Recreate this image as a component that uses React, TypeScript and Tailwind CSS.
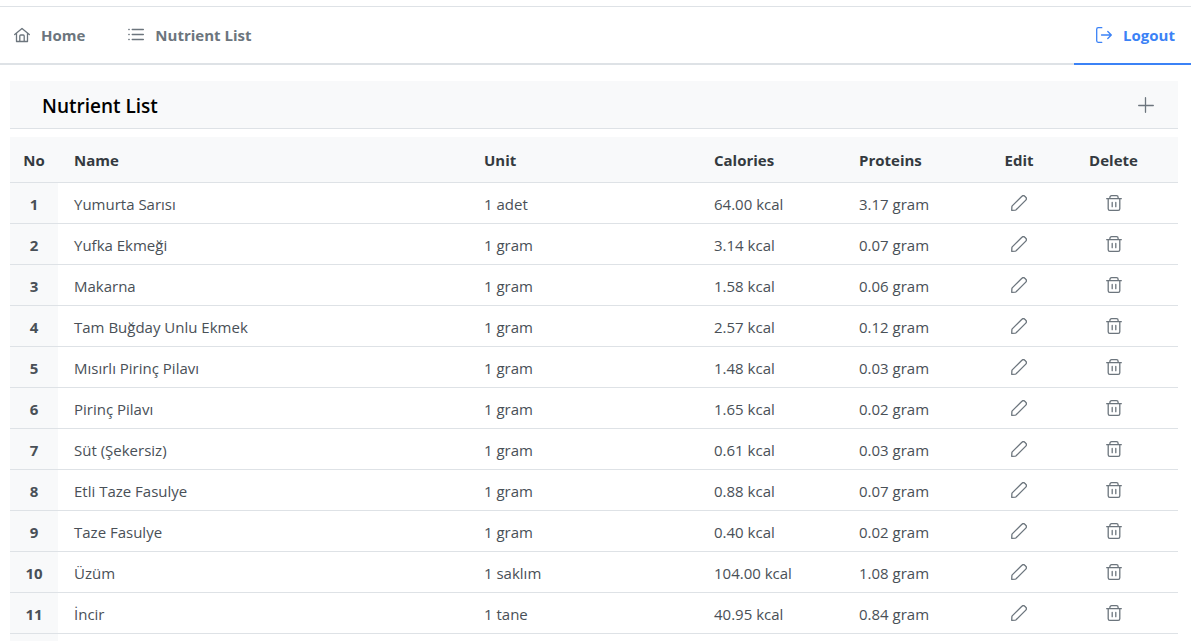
import type { ReactNode } from 'react';

type Nutrient = { name: string; unit: string; calories: string; proteins: string };

const nutrients: Nutrient[] = [
  { name: 'Yumurta Sarısı', unit: '1 adet', calories: '64.00 kcal', proteins: '3.17 gram' },
  { name: 'Yufka Ekmeği', unit: '1 gram', calories: '3.14 kcal', proteins: '0.07 gram' },
  { name: 'Makarna', unit: '1 gram', calories: '1.58 kcal', proteins: '0.06 gram' },
  { name: 'Tam Buğday Unlu Ekmek', unit: '1 gram', calories: '2.57 kcal', proteins: '0.12 gram' },
  { name: 'Mısırlı Pirinç Pilavı', unit: '1 gram', calories: '1.48 kcal', proteins: '0.03 gram' },
  { name: 'Pirinç Pilavı', unit: '1 gram', calories: '1.65 kcal', proteins: '0.02 gram' },
  { name: 'Süt (Şekersiz)', unit: '1 gram', calories: '0.61 kcal', proteins: '0.03 gram' },
  { name: 'Etli Taze Fasulye', unit: '1 gram', calories: '0.88 kcal', proteins: '0.07 gram' },
  { name: 'Taze Fasulye', unit: '1 gram', calories: '0.40 kcal', proteins: '0.02 gram' },
  { name: 'Üzüm', unit: '1 saklım', calories: '104.00 kcal', proteins: '1.08 gram' },
  { name: 'İncir', unit: '1 tane', calories: '40.95 kcal', proteins: '0.84 gram' },
];

function Icon({ children }: { children: ReactNode }) {
  return (
    <svg
      className="size-4 shrink-0"
      viewBox="0 0 16 16"
      fill="none"
      stroke="currentColor"
      strokeWidth="1.3"
      strokeLinecap="round"
      strokeLinejoin="round"
      aria-hidden="true"
    >
      {children}
    </svg>
  );
}

const HomeIcon = () => (
  <Icon>
    <path d="M.7 7.500 8 1.500l7.300 6M2.500 6.300v8.200h11V6.300M5.800 14.300V8.900q0-.9.9-.9h2.600q.9 0 .9.9v5.400" />
  </Icon>
);

const ListIcon = () => (
  <Icon>
    <path d="M4.200 2.500h11.200M4.200 7.500h11.200M4.200 12.500h11.200M.8 2.500h.4M.8 7.500h.4M.8 12.500h.4" />
  </Icon>
);

const LogoutIcon = () => (
  <Icon>
    <path d="M5.800 15.300H2.200A1.600 1.600 0 0 1 .7 13.700V2.300A1.600 1.600 0 0 1 2.200.7H5.800M5.500 8h9.700M11.800 4.500 15.300 8l-3.500 3.500" />
  </Icon>
);

const PlusIcon = () => (
  <Icon>
    <path d="M7.500.7v14.600M.7 8.500h14.600" />
  </Icon>
);

const PencilIcon = () => (
  <Icon>
    <path d="M.7 15.300.9 11.600Q.95 11.200 1.200 10.900L10.900 1.200a2 2 0 0 1 2.900 0l1 1a2 2 0 0 1 0 2.900L5.100 14.800q-.3.25-.7.300Z" />
  </Icon>
);

const TrashIcon = () => (
  <Icon>
    <path d="M.7 3.700h14.600M2.200 3.700v10a1.600 1.600 0 0 0 1.600 1.600h8.400a1.600 1.600 0 0 0 1.600-1.600v-10M3.900 3.700V2.300A1.600 1.600 0 0 1 5.500.7h5a1.600 1.600 0 0 1 1.600 1.600v1.400M6.200 7.400v4.300M9.800 7.400v4.300" />
  </Icon>
);

export default function App() {
  return (
    <div className="flex h-screen flex-col overflow-hidden bg-white pt-1.5 pb-0.5 font-['Open_Sans','Noto_Sans',sans-serif] text-[15px] leading-6 text-[#495057]">
      <nav className="flex shrink-0 justify-between border-t border-[#dee2e6] font-bold text-[#6c757d] shadow-[inset_0_-2px_0_#dee2e6]">
        <div className="flex">
          <a href="#home" className="flex items-center gap-[11px] border-b-2 border-[#dee2e6] px-3.5 py-4">
            <HomeIcon />
            Home
          </a>
          <a
            href="#nutrients"
            className="flex items-center gap-[11px] border-b-2 border-[#dee2e6] py-4 pr-3.5 pl-[29px]"
          >
            <ListIcon />
            Nutrient List
          </a>
        </div>
        <a
          href="#logout"
          className="flex items-center gap-[11px] border-b-2 border-[#3b82f6] py-4 pr-4 pl-[22px] text-[#3b82f6]"
        >
          <LogoutIcon />
          Logout
        </a>
      </nav>

      <main className="mt-4 mr-[13px] ml-2.5 flex min-h-0 flex-1 flex-col gap-2">
        <header className="flex h-12 shrink-0 items-center justify-between border-b border-[#dee2e6] bg-[#f8f9fa] pr-6 pl-8">
          <h1 className="pt-0.5 text-[19px] font-semibold text-black">Nutrient List</h1>
          <button type="button" aria-label="Add nutrient" className="text-[#6c757d]">
            <PlusIcon />
          </button>
        </header>

        <div className="min-h-0 flex-1 overflow-hidden">
          <table className="w-full table-fixed border-separate border-spacing-0 text-left">
            <colgroup>
              <col className="w-12" />
              <col />
              <col className="w-[230px]" />
              <col className="w-[145px]" />
              <col className="w-[146px]" />
              <col className="w-[60px]" />
              <col className="w-[129px]" />
            </colgroup>
            <thead>
              <tr className="h-[46px] bg-[#f8f9fa] text-[#343a40] *:border-b *:border-[#dee2e6] *:font-bold">
                <th className="text-center">No</th>
                <th className="px-4">Name</th>
                <th className="px-4">Unit</th>
                <th className="px-4">Calories</th>
                <th className="px-4">Proteins</th>
                <th className="text-center">Edit</th>
                <th className="text-center">Delete</th>
              </tr>
            </thead>
            <tbody>
              {nutrients.map((item, index) => (
                <tr key={item.name} className="h-[41px] *:border-b *:border-[#dee2e6]">
                  <th scope="row" className="bg-[#f8f9fa] pt-0.5 text-center font-bold">
                    {index + 1}
                  </th>
                  <td className="px-4 pt-0.5">{item.name}</td>
                  <td className="px-4 pt-0.5">{item.unit}</td>
                  <td className="px-4 pt-0.5">{item.calories}</td>
                  <td className="px-4 pt-0.5">{item.proteins}</td>
                  <td>
                    <button type="button" aria-label={`Edit ${item.name}`} className="mx-auto block text-[#6c757d]">
                      <PencilIcon />
                    </button>
                  </td>
                  <td>
                    <button type="button" aria-label={`Delete ${item.name}`} className="mx-auto block text-[#6c757d]">
                      <TrashIcon />
                    </button>
                  </td>
                </tr>
              ))}
              <tr className="h-[41px]">
                <td className="bg-[#f8f9fa]" />
                <td colSpan={6} />
              </tr>
            </tbody>
          </table>
        </div>
      </main>
    </div>
  );
}
